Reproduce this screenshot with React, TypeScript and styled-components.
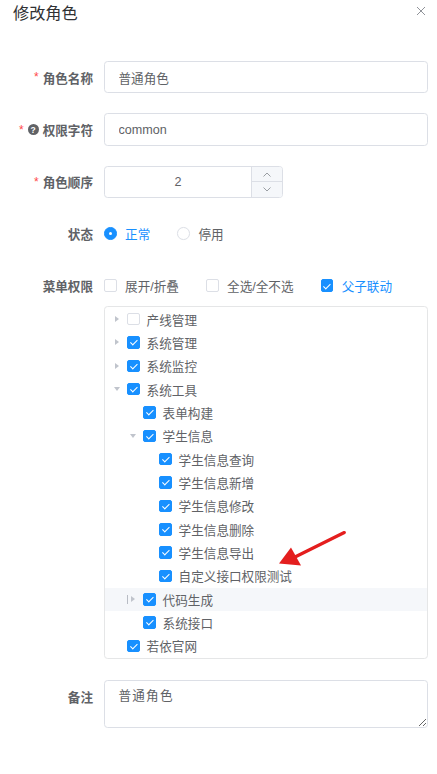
import React from 'react';
import styled, { createGlobalStyle, css } from 'styled-components';

const FONT = `"Liberation Sans", "Noto Sans CJK SC", sans-serif`;
const BLUE = '#1890ff';
const TEXT = '#606266';

const GlobalStyle = createGlobalStyle`
  html, body { margin: 0; padding: 0; background: #fff; }
  body { font-family: ${FONT}; font-size: 12.6px; color: ${TEXT}; }
  * { box-sizing: border-box; }
`;

const Page = styled.div`
  width: 437px;
  min-height: 774px;
  background: #fff;
  overflow: hidden;
`;

const Header = styled.div`
  height: 24px;
  padding: 2px 11px 0 13px;
  display: flex;
  align-items: center;
  justify-content: space-between;
`;

const Title = styled.div`
  font-size: 16.2px;
  line-height: 22px;
  color: #303133;
`;

const CloseIcon = styled.svg`
  width: 10px;
  height: 10px;
  margin-top: -4px;
`;

const Form = styled.div`
  margin-top: 37px;
`;

const FormItem = styled.div<{ $mb?: number }>`
  display: flex;
  align-items: flex-start;
  margin-bottom: ${(p) => (p.$mb ?? 20)}px;
`;

const Label = styled.div`
  width: 104px;
  flex-shrink: 0;
  height: 32.4px;
  padding-right: 11px;
  display: flex;
  align-items: center;
  justify-content: flex-end;
  font-size: 12.6px;
  font-weight: 700;
  color: ${TEXT};
  white-space: nowrap;
`;

const Star = styled.span`
  color: #ff4949;
  font-weight: 400;
  margin-right: 4px;
  font-size: 12px;
`;

const Help = styled.span`
  width: 11px;
  height: 11px;
  border-radius: 50%;
  background: ${TEXT};
  color: #fff;
  font-size: 8.5px;
  font-weight: 700;
  display: inline-flex;
  align-items: center;
  justify-content: center;
  margin-right: 4px;
  font-family: "Liberation Sans", sans-serif;
`;

const Content = styled.div`
  flex: 1;
  min-width: 0;
  margin-right: 9px;
`;

const TextInput = styled.input`
  display: block;
  width: 100%;
  height: 32.4px;
  border: 1px solid #dcdfe6;
  border-radius: 3.6px;
  padding: 0 13.5px;
  font-family: ${FONT};
  font-size: 12.6px;
  color: ${TEXT};
  outline: none;
  background: #fff;
`;

const NumberBox = styled.div`
  width: 179px;
  height: 32.4px;
  border: 1px solid #dcdfe6;
  border-radius: 3.6px;
  display: flex;
  overflow: hidden;
`;

const NumberValue = styled.div`
  flex: 1;
  display: flex;
  align-items: center;
  justify-content: center;
  font-size: 12.6px;
  color: ${TEXT};
`;

const Spin = styled.div`
  width: 31px;
  border-left: 1px solid #dcdfe6;
  display: flex;
  flex-direction: column;
`;

const SpinButton = styled.div<{ $top?: boolean }>`
  flex: 1;
  background: #f5f7fa;
  display: flex;
  align-items: center;
  justify-content: center;
  ${(p) => p.$top && css`border-bottom: 1px solid #dcdfe6;`}
`;

const Line = styled.div`
  height: 32.4px;
  display: flex;
  align-items: center;
`;

const Option = styled.label<{ $active?: boolean }>`
  display: inline-flex;
  align-items: center;
  margin-right: 27px;
  color: ${(p) => (p.$active ? BLUE : TEXT)};
  font-size: 12.6px;
  cursor: pointer;
  white-space: nowrap;
`;

const OptionText = styled.span`
  margin-left: 8.5px;
`;

const Radio = styled.span<{ $checked?: boolean }>`
  width: 12.6px;
  height: 12.6px;
  border-radius: 50%;
  border: 1px solid ${(p) => (p.$checked ? BLUE : '#dcdfe6')};
  background: ${(p) => (p.$checked ? BLUE : '#fff')};
  display: inline-flex;
  align-items: center;
  justify-content: center;
  flex-shrink: 0;
  &::after {
    content: '';
    width: 3.6px;
    height: 3.6px;
    border-radius: 50%;
    background: #fff;
    display: ${(p) => (p.$checked ? 'block' : 'none')};
  }
`;

const Check = styled.span<{ $checked?: boolean }>`
  width: 12.6px;
  height: 12.6px;
  border-radius: 2px;
  border: 1px solid ${(p) => (p.$checked ? BLUE : '#dcdfe6')};
  background: ${(p) => (p.$checked ? BLUE : '#fff')};
  position: relative;
  flex-shrink: 0;
  display: inline-block;
  &::after {
    content: '';
    position: absolute;
    left: 3.6px;
    top: 1.2px;
    width: 2.7px;
    height: 5.8px;
    border: 1px solid #fff;
    border-left: 0;
    border-top: 0;
    transform: rotate(45deg);
    display: ${(p) => (p.$checked ? 'block' : 'none')};
  }
`;

const Tree = styled.div`
  position: relative;
  margin-top: 4.5px;
  border: 1px solid #e5e6e7;
  border-radius: 3.6px;
  overflow: hidden;
`;

const TreeRow = styled.div<{ $level: number; $hover?: boolean }>`
  height: 23.35px;
  display: flex;
  align-items: center;
  padding-left: ${(p) => p.$level * 16}px;
  background: ${(p) => (p.$hover ? '#f5f7fa' : 'transparent')};
  color: ${TEXT};
  font-size: 12.6px;
  white-space: nowrap;
`;

const Expander = styled.span`
  width: 22px;
  height: 100%;
  flex-shrink: 0;
  position: relative;
  display: flex;
  align-items: center;
  justify-content: center;
`;

const Caret = styled.span<{ $open?: boolean }>`
  width: 0;
  height: 0;
  border-left: 4.5px solid #c0c4cc;
  border-top: 3.5px solid transparent;
  border-bottom: 3.5px solid transparent;
  margin-left: 1px;
  transform: ${(p) => (p.$open ? 'rotate(90deg)' : 'none')};
`;

const MouseBar = styled.span`
  position: absolute;
  left: 6px;
  top: 7px;
  width: 1px;
  height: 9px;
  background: #b8bcc4;
`;

const NodeLabel = styled.span`
  margin-left: 7px;
`;

const ArrowMark = styled.svg`
  position: absolute;
  left: 165px;
  top: 218px;
  width: 82px;
  height: 46px;
  pointer-events: none;
`;

const TextArea = styled.textarea`
  display: block;
  width: 100%;
  height: 47.6px;
  border: 1px solid #dcdfe6;
  border-radius: 3.6px;
  padding: 6px 13.5px 4px;
  font-family: ${FONT};
  font-size: 12.6px;
  line-height: 1.5;
  letter-spacing: 1.2px;
  color: ${TEXT};
  resize: vertical;
  outline: none;
`;

type Node = {
  label: string;
  level: number;
  checked: boolean;
  expand?: 'open' | 'closed';
  hover?: boolean;
};

const nodes: Node[] = [
  { label: '产线管理', level: 0, checked: false, expand: 'closed' },
  { label: '系统管理', level: 0, checked: true, expand: 'closed' },
  { label: '系统监控', level: 0, checked: true, expand: 'closed' },
  { label: '系统工具', level: 0, checked: true, expand: 'open' },
  { label: '表单构建', level: 1, checked: true },
  { label: '学生信息', level: 1, checked: true, expand: 'open' },
  { label: '学生信息查询', level: 2, checked: true },
  { label: '学生信息新增', level: 2, checked: true },
  { label: '学生信息修改', level: 2, checked: true },
  { label: '学生信息删除', level: 2, checked: true },
  { label: '学生信息导出', level: 2, checked: true },
  { label: '自定义接口权限测试', level: 2, checked: true },
  { label: '代码生成', level: 1, checked: true, expand: 'closed', hover: true },
  { label: '系统接口', level: 1, checked: true },
  { label: '若依官网', level: 0, checked: true },
];

export default function App() {
  return (
    <Page>
      <GlobalStyle />
      <Header>
        <Title>修改角色</Title>
        <CloseIcon viewBox="0 0 10 10">
          <path d="M1 1L9 9M9 1L1 9" stroke="#909399" strokeWidth="1" fill="none" />
        </CloseIcon>
      </Header>
      <Form>
        <FormItem>
          <Label>
            <Star>*</Star>角色名称
          </Label>
          <Content>
            <TextInput value="普通角色" readOnly />
          </Content>
        </FormItem>
        <FormItem>
          <Label>
            <Star>*</Star>
            <Help>?</Help>权限字符
          </Label>
          <Content>
            <TextInput value="common" readOnly />
          </Content>
        </FormItem>
        <FormItem $mb={19}>
          <Label>
            <Star>*</Star>角色顺序
          </Label>
          <Content>
            <NumberBox>
              <NumberValue>2</NumberValue>
              <Spin>
                <SpinButton $top>
                  <svg width="8" height="5" viewBox="0 0 8 5">
                    <polyline points="0.5,4.5 4,1 7.5,4.5" fill="none" stroke="#909399" strokeWidth="0.9" />
                  </svg>
                </SpinButton>
                <SpinButton>
                  <svg width="8" height="5" viewBox="0 0 8 5">
                    <polyline points="0.5,0.5 4,4 7.5,0.5" fill="none" stroke="#909399" strokeWidth="0.9" />
                  </svg>
                </SpinButton>
              </Spin>
            </NumberBox>
          </Content>
        </FormItem>
        <FormItem>
          <Label>状态</Label>
          <Content>
            <Line>
              <Option $active>
                <Radio $checked />
                <OptionText>正常</OptionText>
              </Option>
              <Option>
                <Radio />
                <OptionText>停用</OptionText>
              </Option>
            </Line>
          </Content>
        </FormItem>
        <FormItem $mb={21.5}>
          <Label>菜单权限</Label>
          <Content>
            <Line>
              <Option>
                <Check />
                <OptionText>展开/折叠</OptionText>
              </Option>
              <Option>
                <Check />
                <OptionText>全选/全不选</OptionText>
              </Option>
              <Option $active>
                <Check $checked />
                <OptionText>父子联动</OptionText>
              </Option>
            </Line>
            <Tree>
              {nodes.map((n) => (
                <TreeRow key={n.label} $level={n.level} $hover={n.hover}>
                  <Expander>
                    {n.hover && <MouseBar />}
                    {n.expand && <Caret $open={n.expand === 'open'} />}
                  </Expander>
                  <Check $checked={n.checked} />
                  <NodeLabel>{n.label}</NodeLabel>
                </TreeRow>
              ))}
              <ArrowMark viewBox="0 0 82 46">
                <line x1="74.3" y1="7.6" x2="25" y2="32" stroke="#e41e1e" strokeWidth="3.3" strokeLinecap="round" />
                <polygon points="9,38.6 21,22.6 31,40.6" fill="#e41e1e" />
              </ArrowMark>
            </Tree>
          </Content>
        </FormItem>
        <FormItem>
          <Label>备注</Label>
          <Content>
            <TextArea value="普通角色" readOnly />
          </Content>
        </FormItem>
      </Form>
    </Page>
  );
}
